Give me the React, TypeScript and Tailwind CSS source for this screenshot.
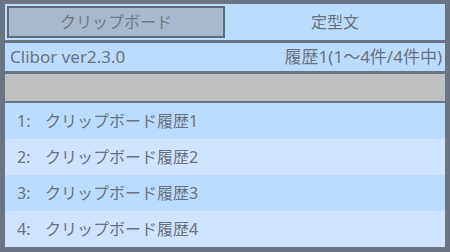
const rows = ['クリップボード履歴1', 'クリップボード履歴2', 'クリップボード履歴3', 'クリップボード履歴4']

export default function App() {
  return (
    <div
      className="w-[450px] h-[252px] bg-[#6a7583] pt-[4px] px-[5px] pb-[5px] flex flex-col text-[#69717e]"
      style={{ fontFamily: '"Noto Sans", "Noto Sans CJK JP", sans-serif' }}
    >
      {/* tabs */}
      <div className="h-[36px] bg-[#bcdcff] flex shrink-0">
        <div className="w-[220px] pl-[2px] py-[2px]">
          <div className="h-full border-2 border-[#5e6a78] bg-[#a7b9cd] flex items-center justify-center text-[16px] text-[#6c7888]">
            クリップボード
          </div>
        </div>
        <div className="flex-1 flex items-center justify-center text-[16px]">定型文</div>
      </div>

      {/* status */}
      <div className="mt-[3px] h-[28px] bg-[#bcdcff] flex items-center justify-between pl-[5px] pr-[3px] text-[17px] shrink-0">
        <span>Clibor ver2.3.0</span>
        <span>履歴1(1～4件/4件中)</span>
      </div>

      {/* search bar */}
      <div className="mt-[3px] h-[27px] bg-[#c0c0c0] shrink-0" />

      {/* history list */}
      <div className="mt-[2px] flex flex-col">
        {rows.map((text, i) => (
          <div
            key={text}
            className={`h-[36px] flex items-center pl-[12px] text-[16px] ${i % 2 === 0 ? 'bg-[#bcdcff]' : 'bg-[#cfe4ff]'}`}
          >
            <span className="w-[28px]">{i + 1}:</span>
            <span>{text}</span>
          </div>
        ))}
      </div>
    </div>
  )
}
